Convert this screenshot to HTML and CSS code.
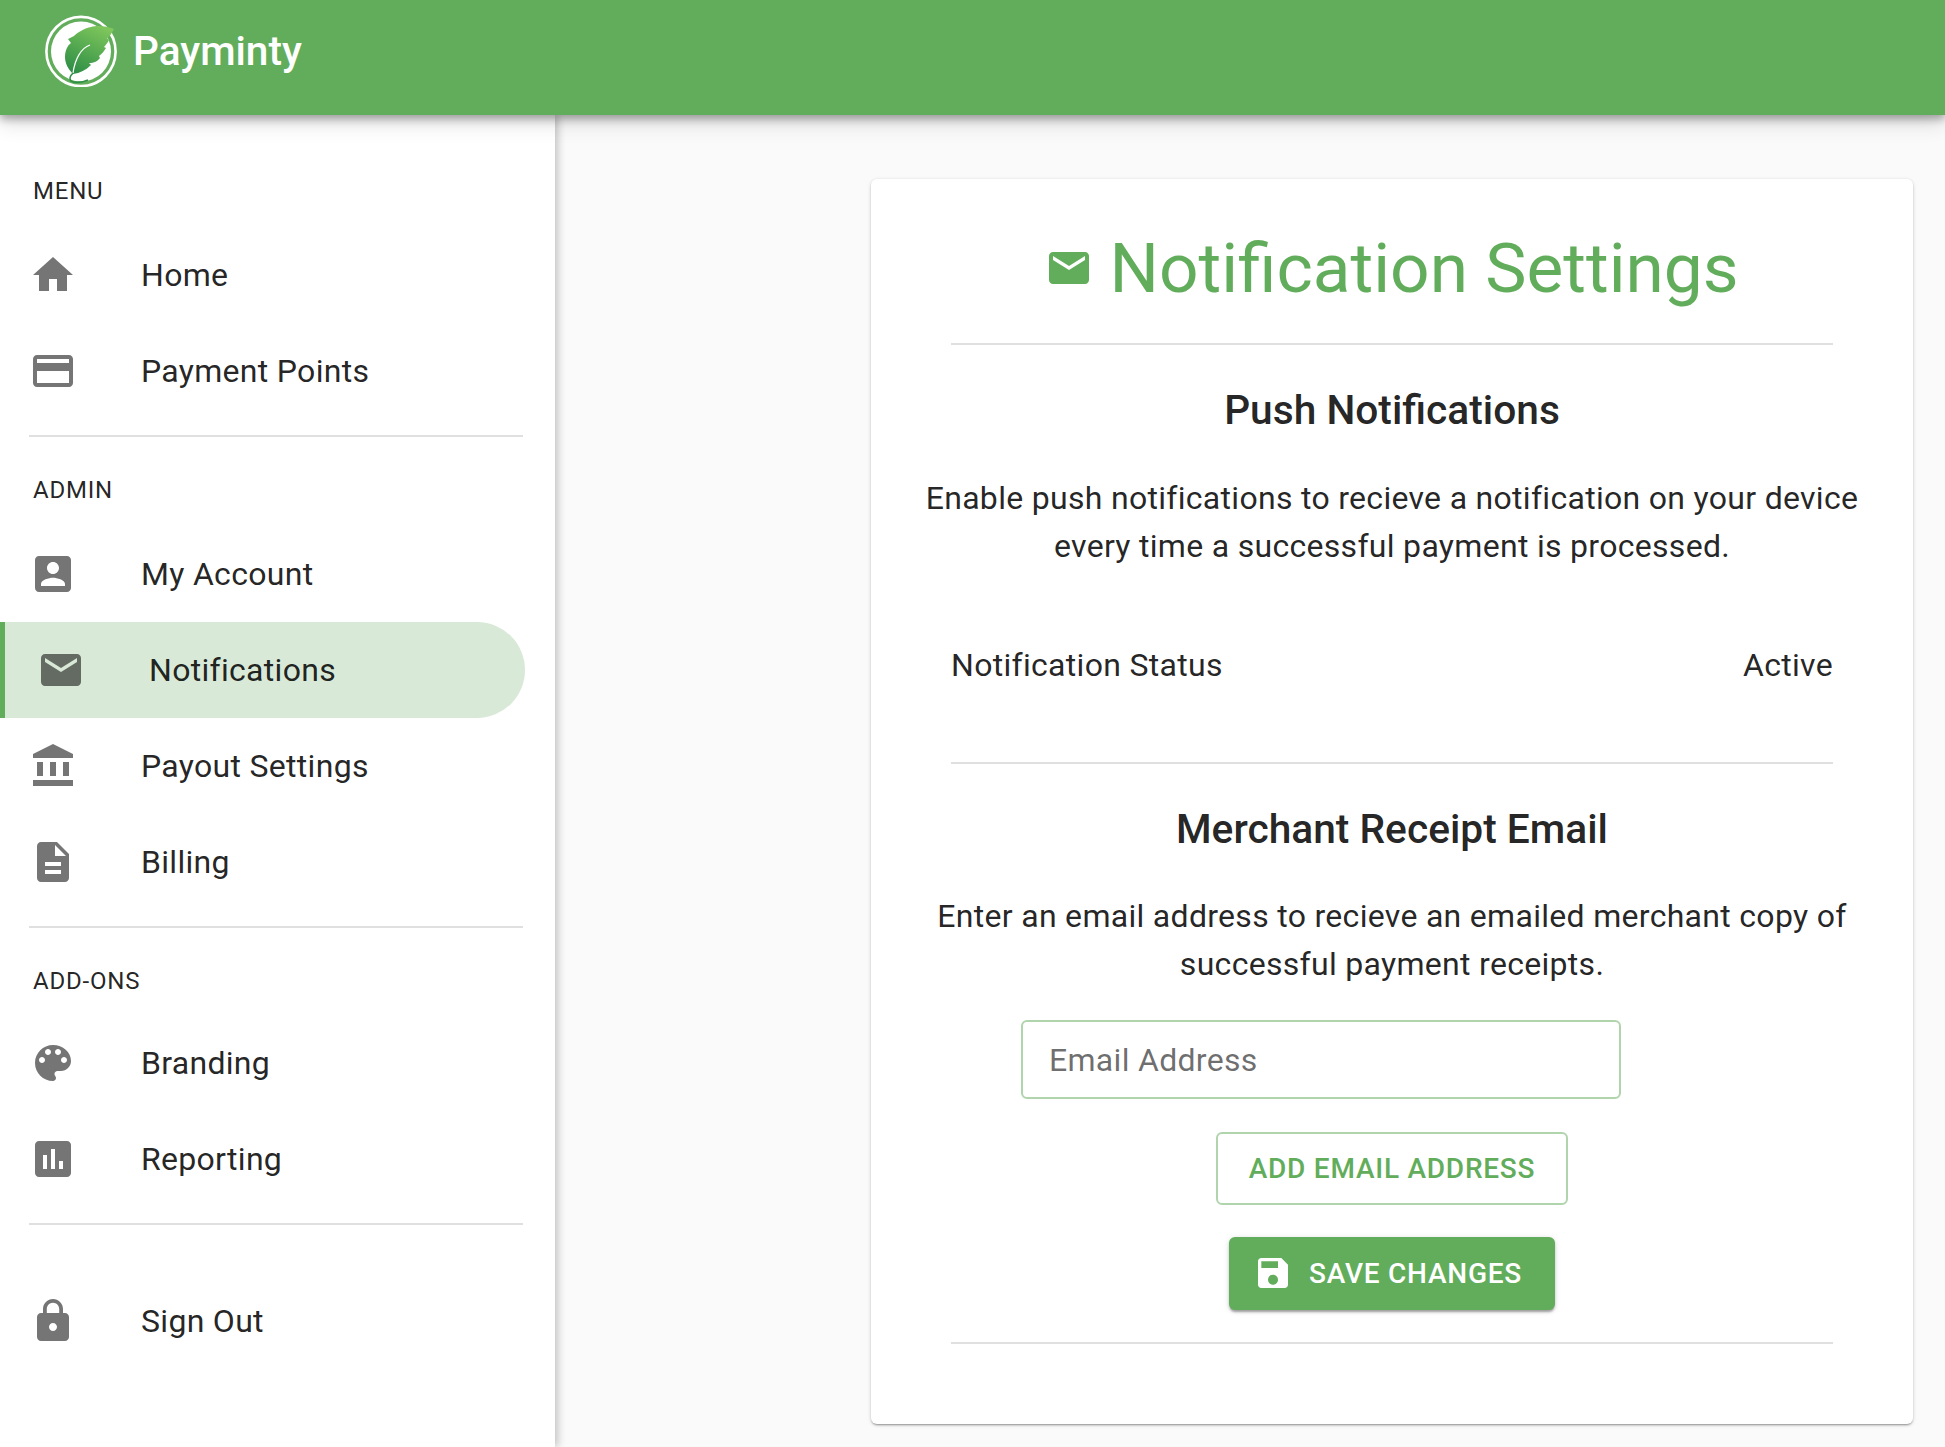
FILE: index.html
```html
<!DOCTYPE html>
<html lang="en">
<head>
<meta charset="utf-8">
<title>Payminty - Notification Settings</title>
<link rel="stylesheet" href="styles.css">
</head>
<body>
<header class="topbar">
  <svg class="logo" viewBox="0 0 72 72" aria-hidden="true">
    <defs>
      <linearGradient id="leafGrad" x1="0.75" y1="0" x2="0.25" y2="1">
        <stop offset="0" stop-color="#7fc65c"/>
        <stop offset="1" stop-color="#2f8f46"/>
      </linearGradient>
    </defs>
    <circle cx="36" cy="36.5" r="34.6" fill="none" stroke="#fff" stroke-width="2.6"/>
    <circle cx="36" cy="36.5" r="30" fill="#fff"/>
    <path d="M69 14C62 11 52 10 46 12C40 13 33 17 29 21L23 24L26 28C22 31 20 36 20 42C20 48 23 54 28 59C35 58 41 55 46 50L44 48C49 48 53 46 55 43L54 41C57 39 59 36 61 33L59 32C61 30 63 27 64 25L62 23C65 21 67 18 69 14Z" fill="url(#leafGrad)"/>
    <path d="M45 30C36 33 30 44 28 58" fill="none" stroke="#fff" stroke-width="1.2"/>
    <path d="M28 58C25 61 24 64 26 66C28 68 36 68 43 65" fill="none" stroke="#2f8f46" stroke-width="1.6"/>
  </svg>
  <span class="brand">Payminty</span>
</header>

<div class="shell">
  <nav class="sidebar">
    <div class="navlabel">MENU</div>
    <a class="navitem">
      <svg class="navicon" viewBox="0 0 24 24"><path d="M10 20v-6h4v6h5v-8h3L12 3 2 12h3v8z"/></svg>
      <span>Home</span>
    </a>
    <a class="navitem">
      <svg class="navicon" viewBox="0 0 24 24"><path d="M20 4H4c-1.11 0-1.99.89-1.99 2L2 18c0 1.11.89 2 2 2h16c1.11 0 2-.89 2-2V6c0-1.11-.89-2-2-2zm0 14H4v-6h16v6zm0-10H4V6h16v2z"/></svg>
      <span>Payment Points</span>
    </a>
    <hr class="navrule">

    <div class="navlabel">ADMIN</div>
    <a class="navitem">
      <svg class="navicon" viewBox="0 0 24 24"><path d="M3 5v14c0 1.1.89 2 2 2h14c1.1 0 2-.9 2-2V5c0-1.1-.9-2-2-2H5c-1.11 0-2 .9-2 2zm12 4c0 1.66-1.34 3-3 3s-3-1.34-3-3 1.34-3 3-3 3 1.34 3 3zm-9 8c0-2 4-3.1 6-3.1s6 1.1 6 3.1v1H6v-1z"/></svg>
      <span>My Account</span>
    </a>
    <a class="navitem active">
      <svg class="navicon" viewBox="0 0 24 24"><path d="M20 4H4c-1.1 0-1.99.9-1.99 2L2 18c0 1.1.9 2 2 2h16c1.1 0 2-.9 2-2V6c0-1.1-.9-2-2-2zm0 4l-8 5-8-5V6l8 5 8-5v2z"/></svg>
      <span>Notifications</span>
    </a>
    <a class="navitem">
      <svg class="navicon" viewBox="0 0 24 24"><path d="M4 10h3v7H4zm6.5 0h3v7h-3zM2 19h20v3H2zm15-9h3v7h-3zm-5-9L2 6v2h20V6z"/></svg>
      <span>Payout Settings</span>
    </a>
    <a class="navitem">
      <svg class="navicon" viewBox="0 0 24 24"><path d="M14 2H6c-1.1 0-1.99.9-1.99 2L4 20c0 1.1.89 2 1.99 2H18c1.1 0 2-.9 2-2V8l-6-6zm2 16H8v-2h8v2zm0-4H8v-2h8v2zm-3-5V3.5L18.5 9H13z"/></svg>
      <span>Billing</span>
    </a>
    <hr class="navrule">

    <div class="navlabel tight">ADD-ONS</div>
    <a class="navitem">
      <svg class="navicon" viewBox="0 0 24 24"><path d="M12 3c-4.97 0-9 4.03-9 9s4.03 9 9 9c.83 0 1.5-.67 1.5-1.5 0-.39-.15-.74-.39-1.01-.23-.26-.38-.61-.38-.99 0-.83.67-1.5 1.5-1.5H16c2.76 0 5-2.24 5-5 0-4.42-4.03-8-9-8zm-5.5 9c-.83 0-1.5-.67-1.5-1.5S5.67 9 6.5 9 8 9.67 8 10.5 7.33 12 6.5 12zm3-4C8.67 8 8 7.33 8 6.5S8.67 5 9.5 5s1.5.67 1.5 1.5S10.33 8 9.5 8zm5 0c-.83 0-1.5-.67-1.5-1.5S13.67 5 14.5 5s1.5.67 1.5 1.5S15.33 8 14.5 8zm3 4c-.83 0-1.5-.67-1.5-1.5S16.67 9 17.5 9s1.5.67 1.5 1.5-.67 1.5-1.5 1.5z"/></svg>
      <span>Branding</span>
    </a>
    <a class="navitem">
      <svg class="navicon" viewBox="0 0 24 24"><path d="M19 3H5c-1.1 0-2 .9-2 2v14c0 1.1.9 2 2 2h14c1.1 0 2-.9 2-2V5c0-1.1-.9-2-2-2zM9 17H7v-7h2v7zm4 0h-2V7h2v10zm4 0h-2v-4h2v4z"/></svg>
      <span>Reporting</span>
    </a>
    <hr class="navrule last">
    <a class="navitem">
      <svg class="navicon" viewBox="0 0 24 24"><path d="M18 8h-1V6c0-2.76-2.24-5-5-5S7 3.24 7 6v2H6c-1.1 0-2 .9-2 2v10c0 1.1.9 2 2 2h12c1.1 0 2-.9 2-2V10c0-1.1-.9-2-2-2zm-6 9c-1.1 0-2-.9-2-2s.9-2 2-2 2 .9 2 2-.9 2-2 2zm3.1-9H8.9V6c0-1.71 1.39-3.1 3.1-3.1 1.71 0 3.1 1.39 3.1 3.1v2z"/></svg>
      <span>Sign Out</span>
    </a>
  </nav>

  <main class="content">
    <section class="card">
      <h1 class="title">
        <svg class="titleicon" viewBox="0 0 24 24"><path d="M20 4H4c-1.1 0-1.99.9-1.99 2L2 18c0 1.1.9 2 2 2h16c1.1 0 2-.9 2-2V6c0-1.1-.9-2-2-2zm0 4l-8 5-8-5V6l8 5 8-5v2z"/></svg>
        <span>Notification Settings</span>
      </h1>
      <hr class="rule">
      <h2 class="heading">Push Notifications</h2>
      <p class="copy">Enable push notifications to recieve a notification on your device every time a successful payment is processed.</p>
      <div class="status"><span>Notification Status</span><span>Active</span></div>
      <hr class="rule">
      <h2 class="heading">Merchant Receipt Email</h2>
      <p class="copy">Enter an email address to recieve an emailed merchant copy of successful payment receipts.</p>
      <input class="email" type="text" placeholder="Email Address">
      <button class="btn outline" type="button">ADD EMAIL ADDRESS</button>
      <button class="btn solid" type="button">
        <svg class="btnicon" viewBox="0 0 24 24"><path d="M17 3H5c-1.11 0-2 .9-2 2v14c0 1.1.89 2 2 2h14c1.1 0 2-.9 2-2V7l-4-4zm-5 16c-1.66 0-3-1.34-3-3s1.34-3 3-3 3 1.34 3 3-1.34 3-3 3zm3-10H5V5h10v4z"/></svg>
        SAVE CHANGES
      </button>
      <hr class="rule end">
    </section>
  </main>
</div>
</body>
</html>
```
FILE: styles.css
```css
* { box-sizing: border-box; }
html, body { margin: 0; height: 100%; }
body {
  font-family: Roboto, "Liberation Sans", sans-serif;
  background: #fafafa;
  color: rgba(0,0,0,.87);
  overflow: hidden;
}
.topbar {
  position: relative;
  z-index: 2;
  height: 115px;
  background: #62ad5b;
  display: flex;
  align-items: flex-start;
  padding: 15px 0 0 45px;
  box-shadow: 0 4px 8px rgba(0,0,0,.3), 0 8px 20px rgba(0,0,0,.14);
}
.logo { width: 72px; height: 72px; flex: none; }
.brand {
  margin: 9px 0 0 16px;
  color: #fff;
  font-size: 40.6px;
  font-weight: 500;
  line-height: 54px;
}
.shell { display: flex; height: 1332px; }
.sidebar {
  width: 555px;
  flex: none;
  background: #fff;
  padding-top: 45px;
  box-shadow: 3px 0 8px rgba(0,0,0,.22);
}
.navlabel {
  height: 60px;
  padding-left: 33px;
  margin-bottom: 7px;
  line-height: 62px;
  font-size: 24px;
  letter-spacing: .8px;
}
.navlabel.tight { margin-bottom: 4.5px; }
.navitem {
  display: flex;
  align-items: center;
  width: 525px;
  height: 96px;
  padding-left: 29px;
  font-size: 32px;
  letter-spacing: .3px;
}
.navicon { width: 48px; height: 48px; margin-right: 64px; fill: rgba(0,0,0,.54); flex: none; }
.navitem.active {
  background: #d8e9d7;
  border-left: 5px solid #62ad5b;
  border-radius: 0 48px 48px 0;
  padding-left: 32px;
}
.navrule {
  width: 494px;
  height: 2px;
  margin: 16px 0 22px 29px;
  border: 0;
  background: #e0e0e0;
}
.navrule.last { margin-bottom: 48px; }
.content { flex: 1; display: flex; justify-content: flex-end; padding: 64px 32px 0 0; align-items: flex-start; }
.card {
  width: 1042px;
  height: 1245px;
  background: #fff;
  border-radius: 6px;
  padding: 0 50px;
  box-shadow: 0 2px 2px -1px rgba(0,0,0,.3), 0 1px 3px rgba(0,0,0,.14), 0 1px 5px rgba(0,0,0,.08);
  display: flex;
  flex-direction: column;
}
.title {
  display: flex;
  align-items: center;
  justify-content: center;
  height: 106px;
  margin: 36px 0 0;
  color: #62ad5b;
  font-size: 69.4px;
  font-weight: 400;
}
.titleicon { width: 48px; height: 48px; margin-right: 16px; fill: #62ad5b; flex: none; }
.rule {
  width: 882px;
  height: 2px;
  margin: 22px auto 0;
  border: 0;
  background: #e0e0e0;
  flex: none;
}
.heading {
  margin: 37px 0 0;
  height: 56px;
  line-height: 56px;
  text-align: center;
  font-size: 40.7px;
  font-weight: 500;
}
.copy {
  margin: 35.5px 0 0;
  text-align: center;
  font-size: 32px;
  line-height: 48.3px;
  letter-spacing: .3px;
}
.status {
  display: flex;
  justify-content: space-between;
  margin: 70px 30px 0;
  height: 50px;
  line-height: 50px;
  font-size: 32px;
  letter-spacing: .3px;
}
.status + .rule { margin-top: 71.5px; }
.email {
  display: block;
  width: 600px;
  height: 79px;
  margin: 31px 0 0 100px;
  padding: 2px 26px 0;
  border: 2px solid #b0d5ad;
  border-radius: 6px;
  font: 400 32px Roboto, sans-serif;
  letter-spacing: .3px;
  background: #fff;
}
.email::placeholder { color: rgba(0,0,0,.58); opacity: 1; }
.btn {
  align-self: center;
  font-family: Roboto, sans-serif;
  font-weight: 500;
  font-size: 28px;
  letter-spacing: .76px;
  border-radius: 6px;
  display: flex;
  align-items: center;
  justify-content: center;
}
.btn.outline {
  width: 352px;
  height: 73px;
  margin-top: 33px;
  background: #fff;
  color: #62ad5b;
  border: 2px solid #b0d5ad;
}
.btn.solid {
  width: 326px;
  height: 73px;
  margin-top: 32px;
  padding-left: 24px;
  justify-content: flex-start;
  background: #62ad5b;
  color: #fff;
  border: 0;
  box-shadow: 0 3px 2px -1px rgba(0,0,0,.22), 0 2px 3px rgba(0,0,0,.14), 0 1px 6px rgba(0,0,0,.12);
}
.btnicon { width: 40px; height: 40px; margin-right: 16px; fill: #fff; flex: none; }
.rule.end { margin-top: 32px; }
```
